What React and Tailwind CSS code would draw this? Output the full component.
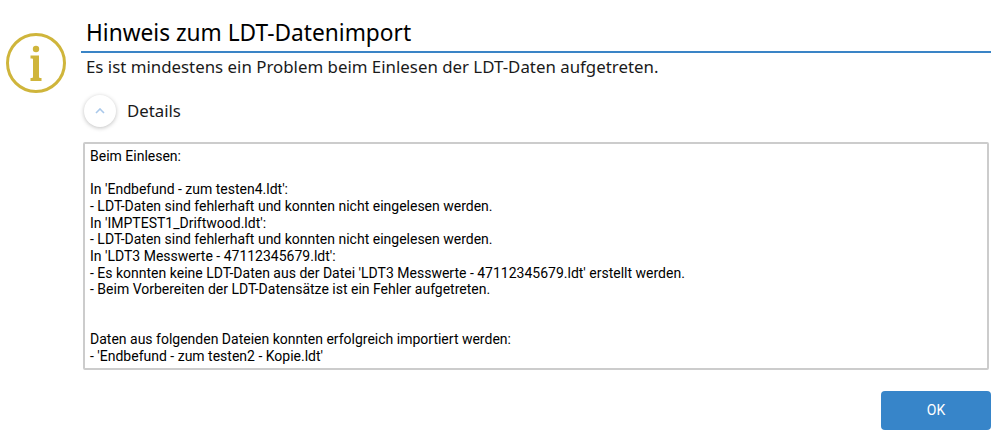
const lines = [
  'Beim Einlesen:',
  '',
  "In 'Endbefund - zum testen4.ldt':",
  '- LDT-Daten sind fehlerhaft und konnten nicht eingelesen werden.',
  "In 'IMPTEST1_Driftwood.ldt':",
  '- LDT-Daten sind fehlerhaft und konnten nicht eingelesen werden.',
  "In 'LDT3 Messwerte - 47112345679.ldt':",
  "- Es konnten keine LDT-Daten aus der Datei 'LDT3 Messwerte - 47112345679.ldt' erstellt werden.",
  '- Beim Vorbereiten der LDT-Datensätze ist ein Fehler aufgetreten.',
  '',
  '',
  'Daten aus folgenden Dateien konnten erfolgreich importiert werden:',
  "- 'Endbefund - zum testen2 - Kopie.ldt'",
];

const InfoIcon = () => (
  <svg width="60" height="60" viewBox="0 0 60 60" className="shrink-0">
    <circle cx="30" cy="30" r="28.5" fill="none" stroke="#cfb53b" strokeWidth="3" />
    <circle cx="30" cy="16" r="3.2" fill="#cfb53b" />
    <path
      d="M24.5 22.5H33v21c0 1 .6 1.6 1.4 1.6h1.1V48h-11v-2.9h1.1c.8 0 1.4-.6 1.4-1.6V26.8c0-.7-.4-1.2-1.2-1.2h-1.3z"
      fill="#cfb53b"
    />
  </svg>
);

export default function App() {
  return (
    <div className="w-[1004px] h-[444px] bg-white overflow-hidden flex pt-[14px] font-['Noto_Sans',sans-serif] text-[#1a1a1a]">
      <div className="w-[81px] pl-[6px] pt-[19px] shrink-0">
        <InfoIcon />
      </div>

      <div className="w-[910px] flex flex-col">
        <div className="pl-[5px] h-[39px] border-b-2 border-[#3a84c6] text-[22.7px] leading-[38px] text-black">
          Hinweis zum LDT-Datenimport
        </div>
        <p className="pl-[5px] mt-[1px] text-[16.85px] leading-[26px]">
          Es ist mindestens ein Problem beim Einlesen der LDT-Daten aufgetreten.
        </p>

        <div className="flex items-center gap-[11px] pl-[3px] mt-[14px] h-[34px]">
          <button className="w-[32px] h-[32px] rounded-full bg-white shadow-[0_1px_4px_rgba(0,0,0,0.25)] flex items-center justify-center">
            <svg width="10" height="6" viewBox="0 0 10 6">
              <path d="M1 5l4-4 4 4" fill="none" stroke="#a9c8ea" strokeWidth="1.6" />
            </svg>
          </button>
          <span className="text-[16.8px] leading-[24px]">Details</span>
        </div>

        <div className="mt-[14px] ml-[2px] w-[906px] h-[228px] border-2 border-[#cccccc] rounded-[2px] pl-[5px] pt-[4px] overflow-hidden font-['Roboto',sans-serif] text-[14px] leading-[16.67px] text-black">
          {lines.map((line, i) => (
            <div key={i} className="h-[16.67px] whitespace-pre">
              {line}
            </div>
          ))}
        </div>

        <div className="flex justify-end mt-[21px]">
          <button className="w-[110px] h-[39px] rounded-[4px] bg-[#3785c9] text-white text-[14px] font-['Roboto',sans-serif]">
            OK
          </button>
        </div>
      </div>
    </div>
  );
}
